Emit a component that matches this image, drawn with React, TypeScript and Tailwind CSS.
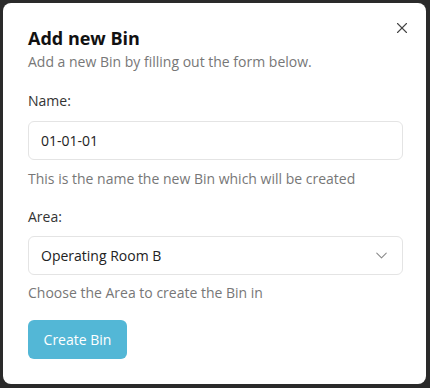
import { X, ChevronDown } from 'lucide-react';

export default function App() {
  return (
    <div className="w-[430px] h-[388px] bg-[#2a2a2a] p-[3px] font-['Open_Sans',sans-serif]">
      <div className="relative h-[381px] w-[423px] rounded-lg bg-white pl-[25px] pr-[23px] pt-[21px]">
        {/* Close */}
        <button className="absolute right-[14px] top-[15px] flex h-5 w-5 items-center justify-center text-[#444]" aria-label="Close">
          <X size={18} strokeWidth={1.5} />
        </button>

        {/* Header */}
        <h2 className="text-lg leading-7 font-bold text-[#111]">Add new Bin</h2>
        <p className="text-sm leading-5 text-[#777]">Add a new Bin by filling out the form below.</p>

        {/* Name field */}
        <label className="mt-[19px] block text-sm leading-5 text-[#333]">Name:</label>
        <div className="mt-[10px] flex h-[39px] items-center rounded-md border border-[#e4e4e4] px-[12px] text-sm text-[#222]">
          01-01-01
        </div>
        <p className="mt-[9px] text-sm leading-5 text-[#777]">This is the name the new Bin which will be created</p>

        {/* Area field */}
        <label className="mt-[18px] block text-sm leading-5 text-[#333]">Area:</label>
        <div className="mt-[9px] flex h-[39px] items-center justify-between rounded-md border border-[#e4e4e4] pl-[12px] pr-[11px] text-sm text-[#222]">
          <span>Operating Room B</span>
          <ChevronDown size={19} strokeWidth={1.3} className="text-[#888]" />
        </div>
        <p className="mt-[8px] text-sm leading-5 text-[#777]">Choose the Area to create the Bin in</p>

        <button className="mt-[17px] h-[39px] w-[99px] rounded-md bg-[#53b7d6] text-sm text-white">
          Create Bin
        </button>
      </div>
    </div>
  );
}
